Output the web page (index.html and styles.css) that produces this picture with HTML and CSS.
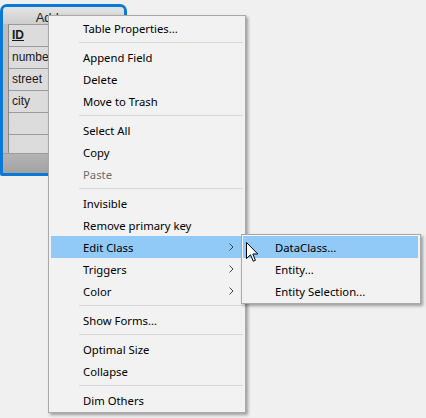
FILE: index.html
```html
<!DOCTYPE html>
<html>
<head>
<meta charset="utf-8">
<link rel="stylesheet" href="styles.css">
</head>
<body>
<div class="canvas">
  <div class="table-widget">
    <div class="tw-title">Address</div>
    <div class="tw-body">
      <div class="tw-col">
        <div class="tw-cell pk">ID</div>
        <div class="tw-cell">number</div>
        <div class="tw-cell">street</div>
        <div class="tw-cell">city</div>
        <div class="tw-cell"></div>
        <div class="tw-cell"></div>
      </div>
    </div>
    <div class="tw-foot"></div>
  </div>

  <div class="menu main-menu">
    <div class="item">Table Properties...</div>
    <div class="sep"></div>
    <div class="item">Append Field</div>
    <div class="item">Delete</div>
    <div class="item">Move to Trash</div>
    <div class="sep"></div>
    <div class="item">Select All</div>
    <div class="item">Copy</div>
    <div class="item disabled">Paste</div>
    <div class="sep"></div>
    <div class="item">Invisible</div>
    <div class="item">Remove primary key</div>
    <div class="item active">Edit Class<svg class="chev" width="5" height="8" viewBox="0 0 5 8"><polyline points="0.5,0.5 4,4 0.5,7.5" fill="none" stroke="#444" stroke-width="1"/></svg></div>
    <div class="item">Triggers<svg class="chev" width="5" height="8" viewBox="0 0 5 8"><polyline points="0.5,0.5 4,4 0.5,7.5" fill="none" stroke="#444" stroke-width="1"/></svg></div>
    <div class="item">Color<svg class="chev" width="5" height="8" viewBox="0 0 5 8"><polyline points="0.5,0.5 4,4 0.5,7.5" fill="none" stroke="#444" stroke-width="1"/></svg></div>
    <div class="sep"></div>
    <div class="item">Show Forms...</div>
    <div class="sep"></div>
    <div class="item">Optimal Size</div>
    <div class="item">Collapse</div>
    <div class="sep"></div>
    <div class="item">Dim Others</div>
  </div>

  <div class="menu sub-menu">
    <div class="item active">DataClass...</div>
    <div class="item">Entity...</div>
    <div class="item">Entity Selection...</div>
  </div>

  <svg class="cursor" width="13" height="21" viewBox="0 0 13 21">
    <path d="M0.5 0.5 L0.5 16.5 L4.5 12.8 L7.2 19.2 L9.4 18.3 L6.8 12 L11.8 12 Z" fill="#fff" stroke="#000" stroke-width="1" stroke-linejoin="miter"/>
  </svg>
</div>
</body>
</html>
```

FILE: styles.css
```css
html, body {
  margin: 0;
  padding: 0;
}
body {
  background: #f0f0f0;
  width: 426px;
  height: 418px;
  overflow: hidden;
  font-family: "Noto Sans", "Open Sans", sans-serif;
}
.canvas {
  position: relative;
  width: 426px;
  height: 418px;
}

/* table widget on the diagram canvas */
.table-widget {
  position: absolute;
  left: 0;
  top: 4px;
  width: 127px;
  height: 172px;
  box-sizing: border-box;
  border: 3px solid #0a78d6;
  border-radius: 7px 7px 2px 2px;
  background: #bdbdbd;
  display: flex;
  flex-direction: column;
  overflow: hidden;
}
.tw-title {
  flex: 0 0 17px;
  height: 17px;
  line-height: 21px;
  padding-right: 8px;
  text-align: center;
  font-family: "Liberation Sans", Arial, sans-serif;
  font-size: 13px;
  color: #222;
  background: linear-gradient(#e4e4e4, #cdcdcd);
}
.tw-body {
  flex: 0 0 129px;
  height: 129px;
  overflow: hidden;
  padding-left: 5px;
  background: #bdbdbd;
}
.tw-col {
  border-left: 1px solid #8a8a8a;
  border-top: 1px solid #9a9a9a;
  background: #dcdcdc;
}
.tw-cell {
  height: 21px;
  border-bottom: 1px solid #9c9c9c;
  padding-left: 3px;
  font-family: "Liberation Sans", Arial, sans-serif;
  font-size: 12px;
  line-height: 21px;
  color: #1a1a1a;
}
.tw-cell.pk {
  font-weight: bold;
  text-decoration: underline;
}
.tw-foot {
  flex: 1;
  background: linear-gradient(#b4b4b4, #a2a2a2);
  border-top: 1px solid #9a9a9a;
}

/* menus */
.menu {
  position: absolute;
  box-sizing: border-box;
  background: #f2f2f2;
  border: 1px solid #a9a9a9;
  box-shadow: 2px 2px 3px rgba(0, 0, 0, 0.35);
  font-size: 11.3px;
  color: #000;
}
.main-menu {
  left: 48px;
  top: 15px;
  width: 198px;
  padding: 1px 4px 1px 2px;
}
.sub-menu {
  left: 241px;
  top: 234px;
  width: 180px;
  padding: 1px 2px 1px 1px;
}
.item {
  position: relative;
  height: 22px;
  line-height: 23px;
  padding-left: 32px;
  white-space: nowrap;
}
.item.active {
  background: #91c9f7;
}
.item.disabled {
  color: #6d6d6d;
}
.chev {
  position: absolute;
  right: 7px;
  top: 7px;
}
.sep {
  height: 7px;
  position: relative;
}
.sep::after {
  content: "";
  position: absolute;
  left: 28px;
  right: -2px;
  top: 3px;
  height: 1px;
  background: #d7d7d7;
}
.cursor {
  position: absolute;
  left: 246px;
  top: 242px;
}
```
